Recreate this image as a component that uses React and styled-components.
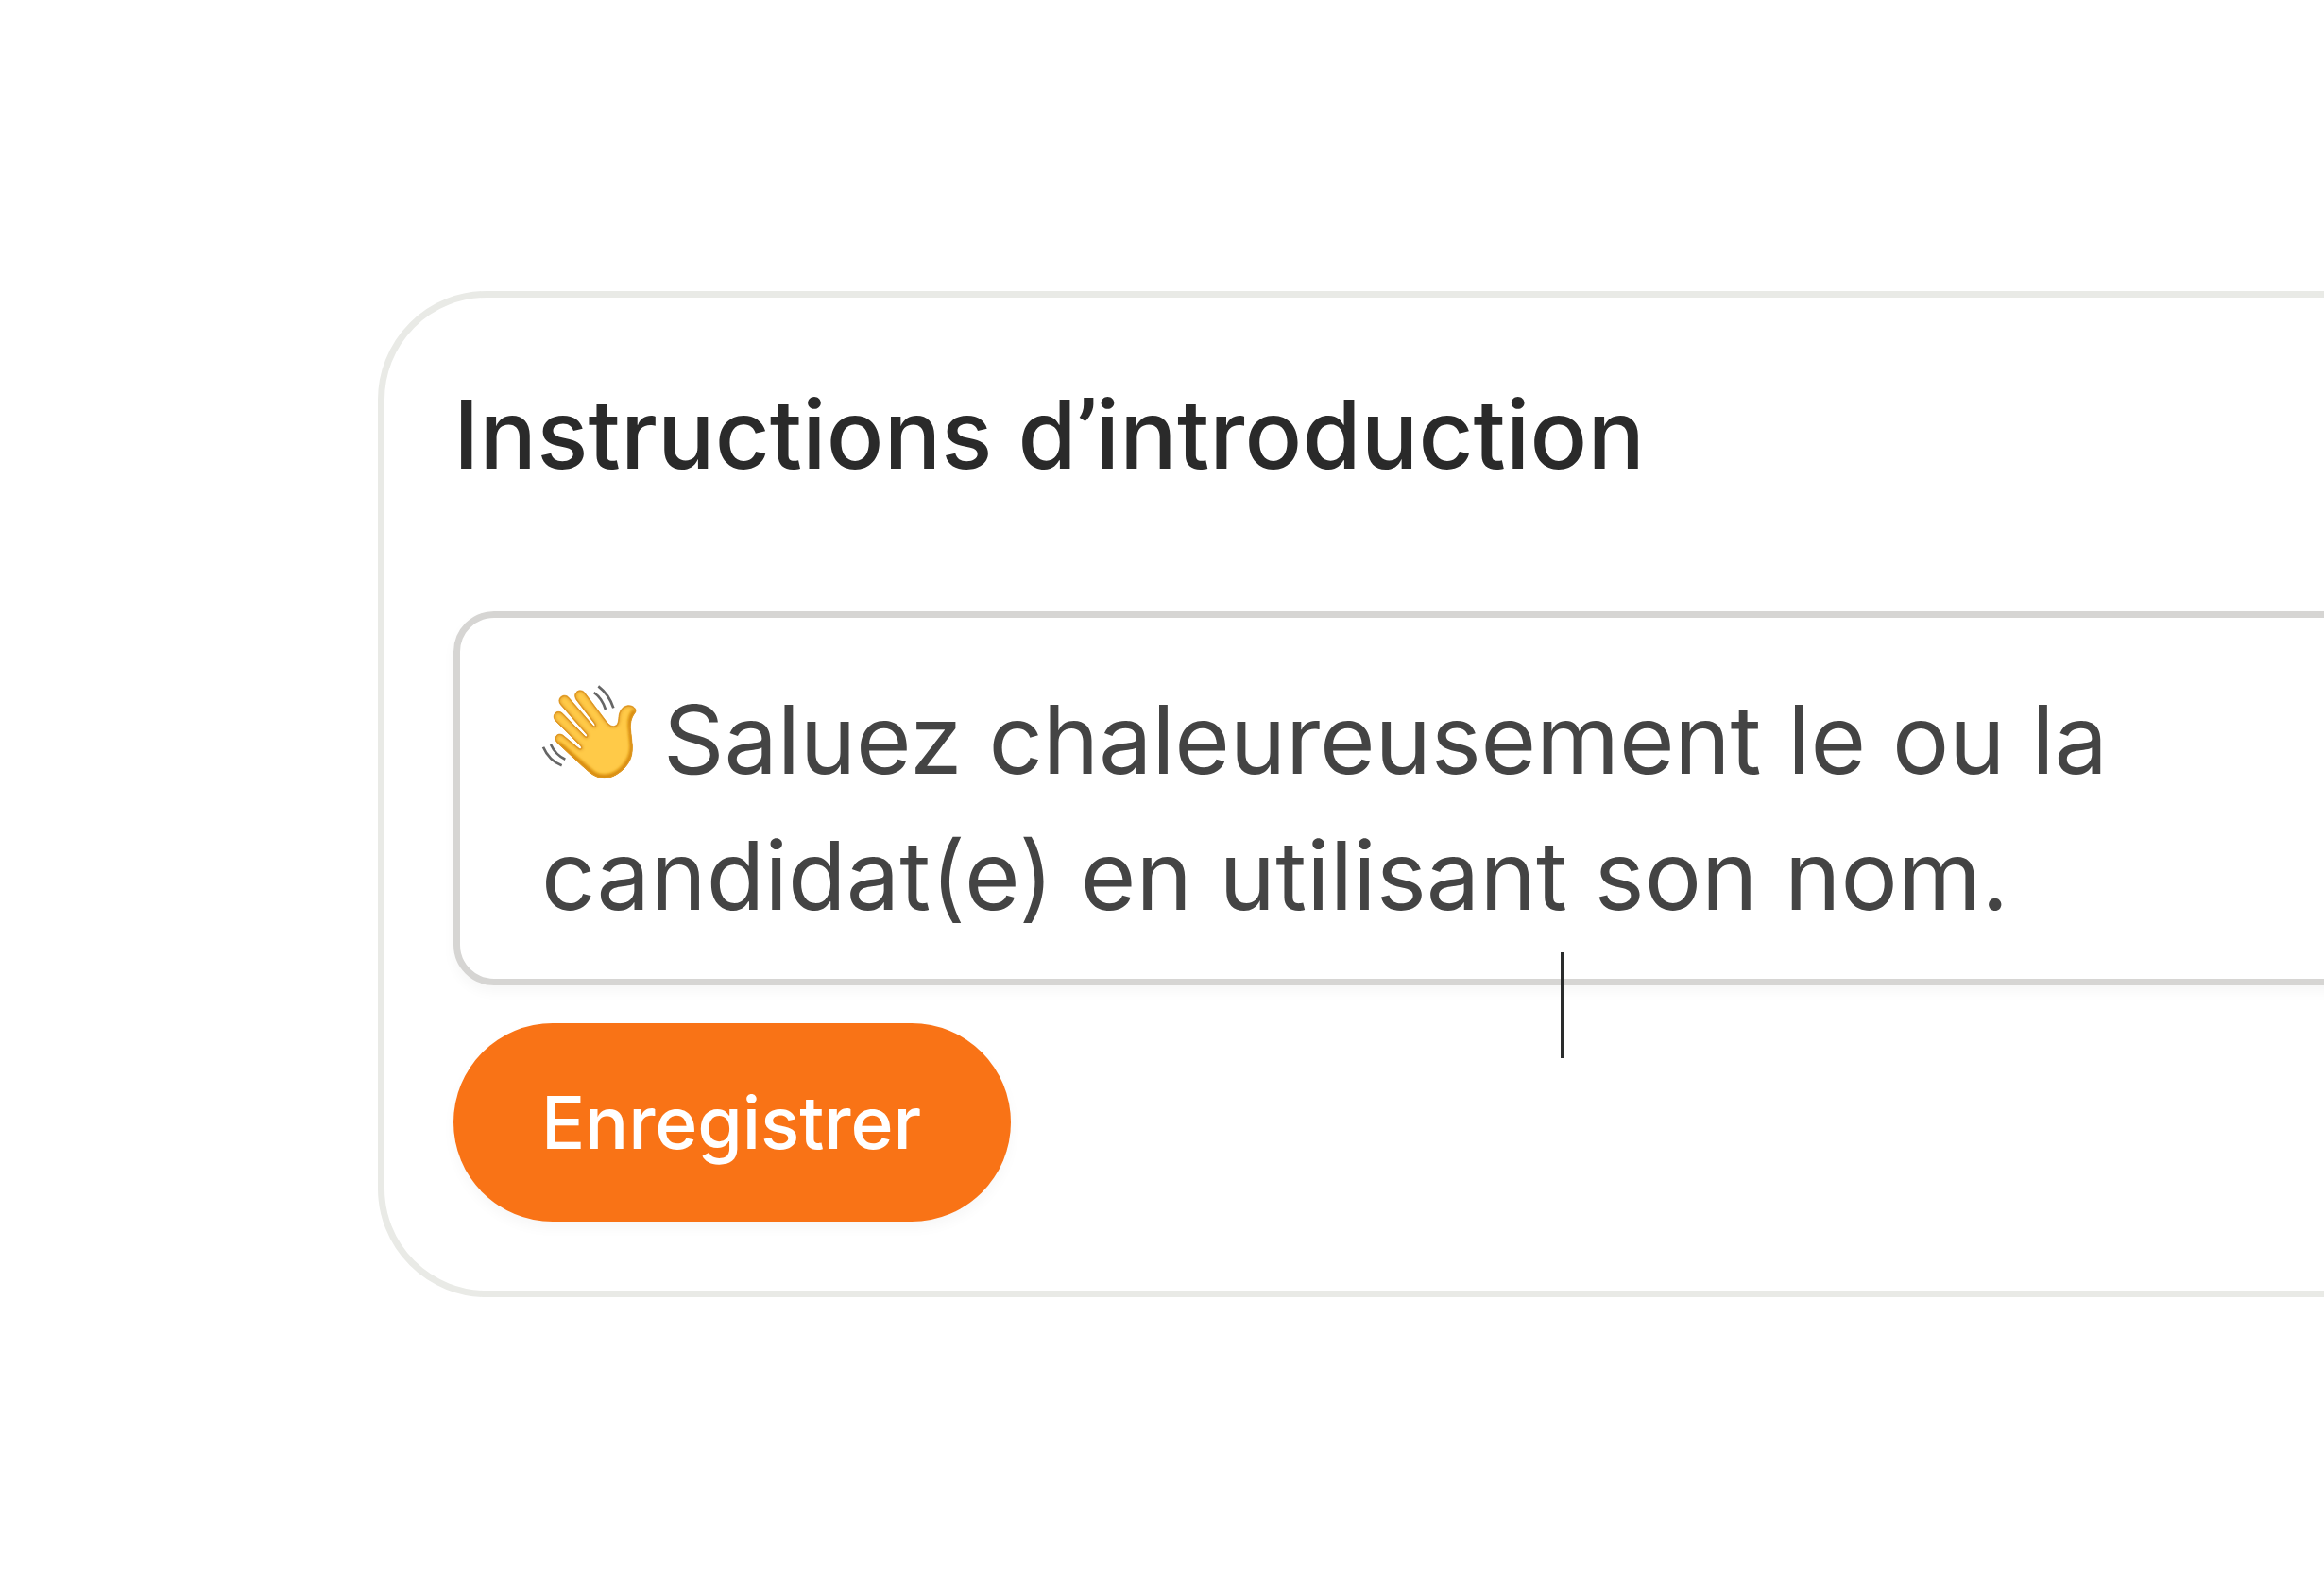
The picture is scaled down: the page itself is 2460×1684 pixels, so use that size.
import styled, { createGlobalStyle } from "styled-components"

const GlobalStyle = createGlobalStyle`
    * {
        box-sizing: border-box;
    }
    body {
        margin: 0;
        background-color: white;
        font-family: Inter, "Liberation Sans", sans-serif;
        overflow: hidden;
    }
`
const Page = styled.main`
    height: 100vh;
    padding: 308px 0 0 400px;
    overflow: hidden;
`
const Card = styled.section`
    display: flex;
    flex-direction: column;
    align-items: flex-start;
    width: 2400px;
    padding: 73px;
    border: 7px solid #e9eae6;
    border-radius: 115px;
`
const Title = styled.h2`
    margin: 0 0 115px;
    height: 144px;
    font-size: 100.6px;
    font-weight: 500;
    line-height: 143px;
    letter-spacing: 0.15px;
    color: #2a2a2a;
`
const Apostrophe = styled.span`
    font-family: Roboto, sans-serif;
    line-height: 1;
    margin-right: -2px;
`
const Field = styled.div`
    position: relative;
    width: 100%;
    height: 396px;
    padding: 57px 86px 37px;
    margin-bottom: 40px;
    border: 7px solid #d6d5d3;
    border-radius: 43px;
    box-shadow: 0 7px 14px rgba(0, 0, 0, 0.035);
`
const Line = styled.p`
    margin: 0;
    font-size: 100.6px;
    line-height: 144px;
    letter-spacing: ${({ $spacing }) => $spacing || "normal"};
    white-space: nowrap;
    color: #444;
`
const Caret = styled.span`
    position: absolute;
    left: 1165px;
    top: 354px;
    width: 4px;
    height: 112px;
    background-color: #2a2c2c;
`
const SaveButton = styled.button`
    display: flex;
    align-items: center;
    justify-content: center;
    width: 590px;
    height: 210px;
    padding: 0 2px 0 0;
    border: none;
    border-radius: 105px;
    background-color: #f97316;
    box-shadow: 0 7px 14px rgba(0, 0, 0, 0.035);
    color: white;
    font-family: inherit;
    font-size: 76.8px;
    font-weight: 500;
    letter-spacing: -0.1px;
    cursor: pointer;
`
const Wave = styled.svg`
    width: 102px;
    height: 102px;
    margin: 0 -2px 0 1px;
    overflow: visible;
    vertical-align: -7px;
`
const HAND = `M338 126 C334 115 321 110 309 113 C294 117 286 131 284 147
    C283 164 281 177 267 178 C256 178 250 169 243 161 L176 72
    C169 62 156 62 149 70 C143 77 144 86 149 94 L207 170 C211 177 208 181 203 177
    L126 88 C119 79 107 78 99 86 C93 93 93 101 99 109 L182 204
    C186 210 182 214 177 210 L106 138 C98 130 87 130 81 138
    C75 146 78 155 84 162 L162 240 C168 247 165 252 158 249
    L110 209 C101 201 91 202 86 208 C80 216 83 225 91 233
    L168 304 C191 325 211 343 238 343 C264 342 285 328 303 310
    C323 289 328 266 327 239 L321 183 C321 163 325 150 333 139
    C337 134 339 130 338 126 Z`

const WavingHand = () => (
    <Wave viewBox="41 44 306 306" role="img" aria-label="👋">
        <defs>
            <clipPath id="hand-clip">
                <path d={HAND} />
            </clipPath>
            <filter id="hand-soft" x="-20%" y="-20%" width="140%" height="140%">
                <feGaussianBlur stdDeviation="5" />
            </filter>
        </defs>
        <path d={HAND} fill="#ffca48" stroke="#dd9622" strokeWidth="2" />
        <g clipPath="url(#hand-clip)">
            <path d={HAND} fill="none" stroke="#e09b2a" strokeWidth="10" opacity="0.9" filter="url(#hand-soft)" />
            <path
                d="M336 130 C321 153 322 165 326 195 L330 242 C330 272 313 301 294 319 C267 342 229 350 201 331 L90 236"
                fill="none"
                stroke="#d98e10"
                strokeWidth="22"
                filter="url(#hand-soft)"
            />
            <path d={HAND} fill="none" stroke="#dd9622" strokeWidth="6" />
        </g>
        <g fill="none" stroke="#666" strokeWidth="8">
            <path d="M205 71 Q231 89 242 125" />
            <path d="M219 51 Q253 77 267 120" />
            <path d="M68 236 Q83 269 114 283" />
            <path d="M44 244 Q62 286 103 303" />
        </g>
    </Wave>
)

const App = () => {
  return (
    <>
        <GlobalStyle />
        <Page>
            <Card>
                <Title>Instructions d<Apostrophe>’</Apostrophe>introduction</Title>
                <Field>
                    <Line $spacing="-0.22px"><WavingHand /> Saluez chaleureusement le ou la</Line>
                    <Line $spacing="0.12px">candidat(e) en utilisant son nom.</Line>
                    <Caret />
                </Field>
                <SaveButton>Enregistrer</SaveButton>
            </Card>
        </Page>
    </>
  )
}

export default App
